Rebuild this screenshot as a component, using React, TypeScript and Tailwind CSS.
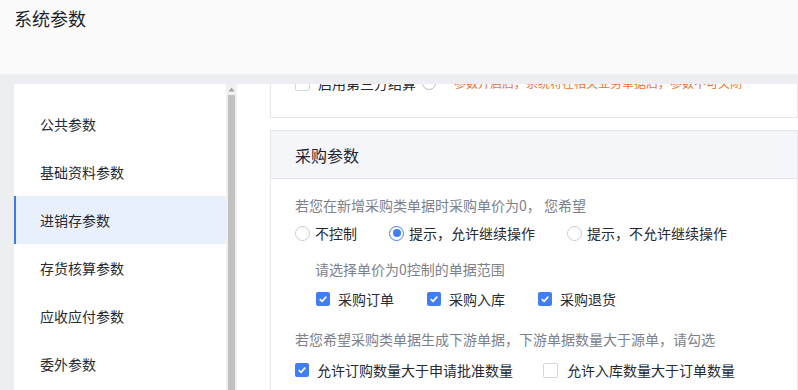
import React from 'react'

const menu = ['公共参数', '基础资料参数', '进销存参数', '存货核算参数', '应收应付参数', '委外参数']

function CheckBox({ checked }: { checked?: boolean }) {
  if (!checked) {
    return <span className="w-[15px] h-[15px] shrink-0 rounded-[2px] border border-[#d4d7de] bg-white" />
  }
  return (
    <span className="w-[14px] h-[14px] shrink-0 rounded-[2px] bg-[#3f7ff3] flex items-center justify-center">
      <svg width="10" height="10" viewBox="0 0 10 10">
        <polyline points="1.8,5.2 4.1,7.4 8.3,2.6" fill="none" stroke="#fff" strokeWidth="1.6" />
      </svg>
    </span>
  )
}

function Radio({ checked }: { checked?: boolean }) {
  return (
    <span
      className={
        checked
          ? 'w-[15px] h-[15px] shrink-0 rounded-full border border-[#3f7ff3] bg-white flex items-center justify-center'
          : 'w-[15px] h-[15px] shrink-0 rounded-full border border-[#c9cdd4] bg-white'
      }
    >
      {checked && <span className="w-[8px] h-[8px] rounded-full bg-[#3f7ff3]" />}
    </span>
  )
}

export default function App() {
  return (
    <div className="w-[798px] h-[390px] overflow-hidden bg-[#eceef2] font-['Noto_Sans_CJK_SC',sans-serif] text-[#262a33]">
      {/* Header */}
      <header className="h-[74px] bg-[#fbfbfc] pl-[14px] pt-[4px] text-[18px] leading-[28px] text-[#1c1f2b]">
        系统参数
      </header>

      <div className="flex h-[316px] pt-[10px] pl-[14px]">
        {/* Sidebar */}
        <aside className="w-[212px] bg-white pt-[16px]">
          {menu.map((m, i) => (
            <div
              key={m}
              className={
                i === 2
                  ? 'h-[48px] flex items-center pl-[24px] border-l-2 border-[#3d7cf0] bg-[#e9f0fd] text-[14px]'
                  : 'h-[48px] flex items-center pl-[26px] text-[14px]'
              }
            >
              {m}
            </div>
          ))}
        </aside>

        {/* Scrollbar */}
        <div className="w-[11px] bg-[#f1f1f1] flex flex-col items-center pt-[2px]">
          <svg width="7" height="5" viewBox="0 0 7 5" className="mt-[1px]">
            <polygon points="3.5,0.5 6.5,4.5 0.5,4.5" fill="#a3a3a3" />
          </svg>
          <div className="mt-[3px] w-[7px] flex-1 bg-[#c1c1c1]" />
        </div>

        {/* Content */}
        <main className="flex-1 bg-white overflow-hidden pl-[33px]">
          <div className="-mt-[20px] h-[54px] border border-[#e5e6eb] pt-[8px] pl-[24px] flex items-start">
            <div className="flex items-center h-[20px]">
              <CheckBox />
              <span className="ml-[8px] text-[14px] leading-[20px]">启用第三方结算</span>
              <span className="ml-[6px] w-[14px] h-[14px] rounded-full border border-[#b8bcc4]" />
              <span className="ml-[18px] text-[12px] leading-[20px] text-[#e8742c] whitespace-nowrap">
                参数开启后，系统将在相关业务单据后，参数不可关闭
              </span>
            </div>
          </div>

          <section className="mt-[12px] border border-[#e5e6eb] h-[300px]">
            <div className="h-[48px] bg-[#f5f6fa] border-b border-[#e5e6eb] flex items-center pl-[24px] text-[16px] text-[#1f2230]">
              采购参数
            </div>
            <div className="pl-[24px] text-[14px] leading-[20px]">
              <p className="pt-[16px] text-[#7d818c]">若您在新增采购类单据时采购单价为0， 您希望</p>

              <div className="mt-[8px] flex items-center gap-[32px]">
                <label className="flex items-center gap-[5px]">
                  <Radio />
                  <span>不控制</span>
                </label>
                <label className="flex items-center gap-[5px]">
                  <Radio checked />
                  <span>提示，允许继续操作</span>
                </label>
                <label className="flex items-center gap-[5px]">
                  <Radio />
                  <span>提示，不允许继续操作</span>
                </label>
              </div>

              <div className="pl-[20px]">
                <p className="mt-[16px] text-[#7d818c]">请选择单价为0控制的单据范围</p>
                <div className="mt-[10px] flex items-center gap-[33px] pl-[1px]">
                  {['采购订单', '采购入库', '采购退货'].map((t) => (
                    <label key={t} className="flex items-center gap-[8px]">
                      <CheckBox checked />
                      <span>{t}</span>
                    </label>
                  ))}
                </div>
              </div>

              <p className="mt-[20px] text-[#7d818c]">若您希望采购类单据生成下游单据，下游单据数量大于源单，请勾选</p>
              <div className="mt-[11px] flex items-center gap-[30px]">
                <label className="flex items-center gap-[8px]">
                  <CheckBox checked />
                  <span>允许订购数量大于申请批准数量</span>
                </label>
                <label className="flex items-center gap-[9px]">
                  <CheckBox />
                  <span>允许入库数量大于订单数量</span>
                </label>
              </div>
            </div>
          </section>
        </main>
      </div>
    </div>
  )
}
